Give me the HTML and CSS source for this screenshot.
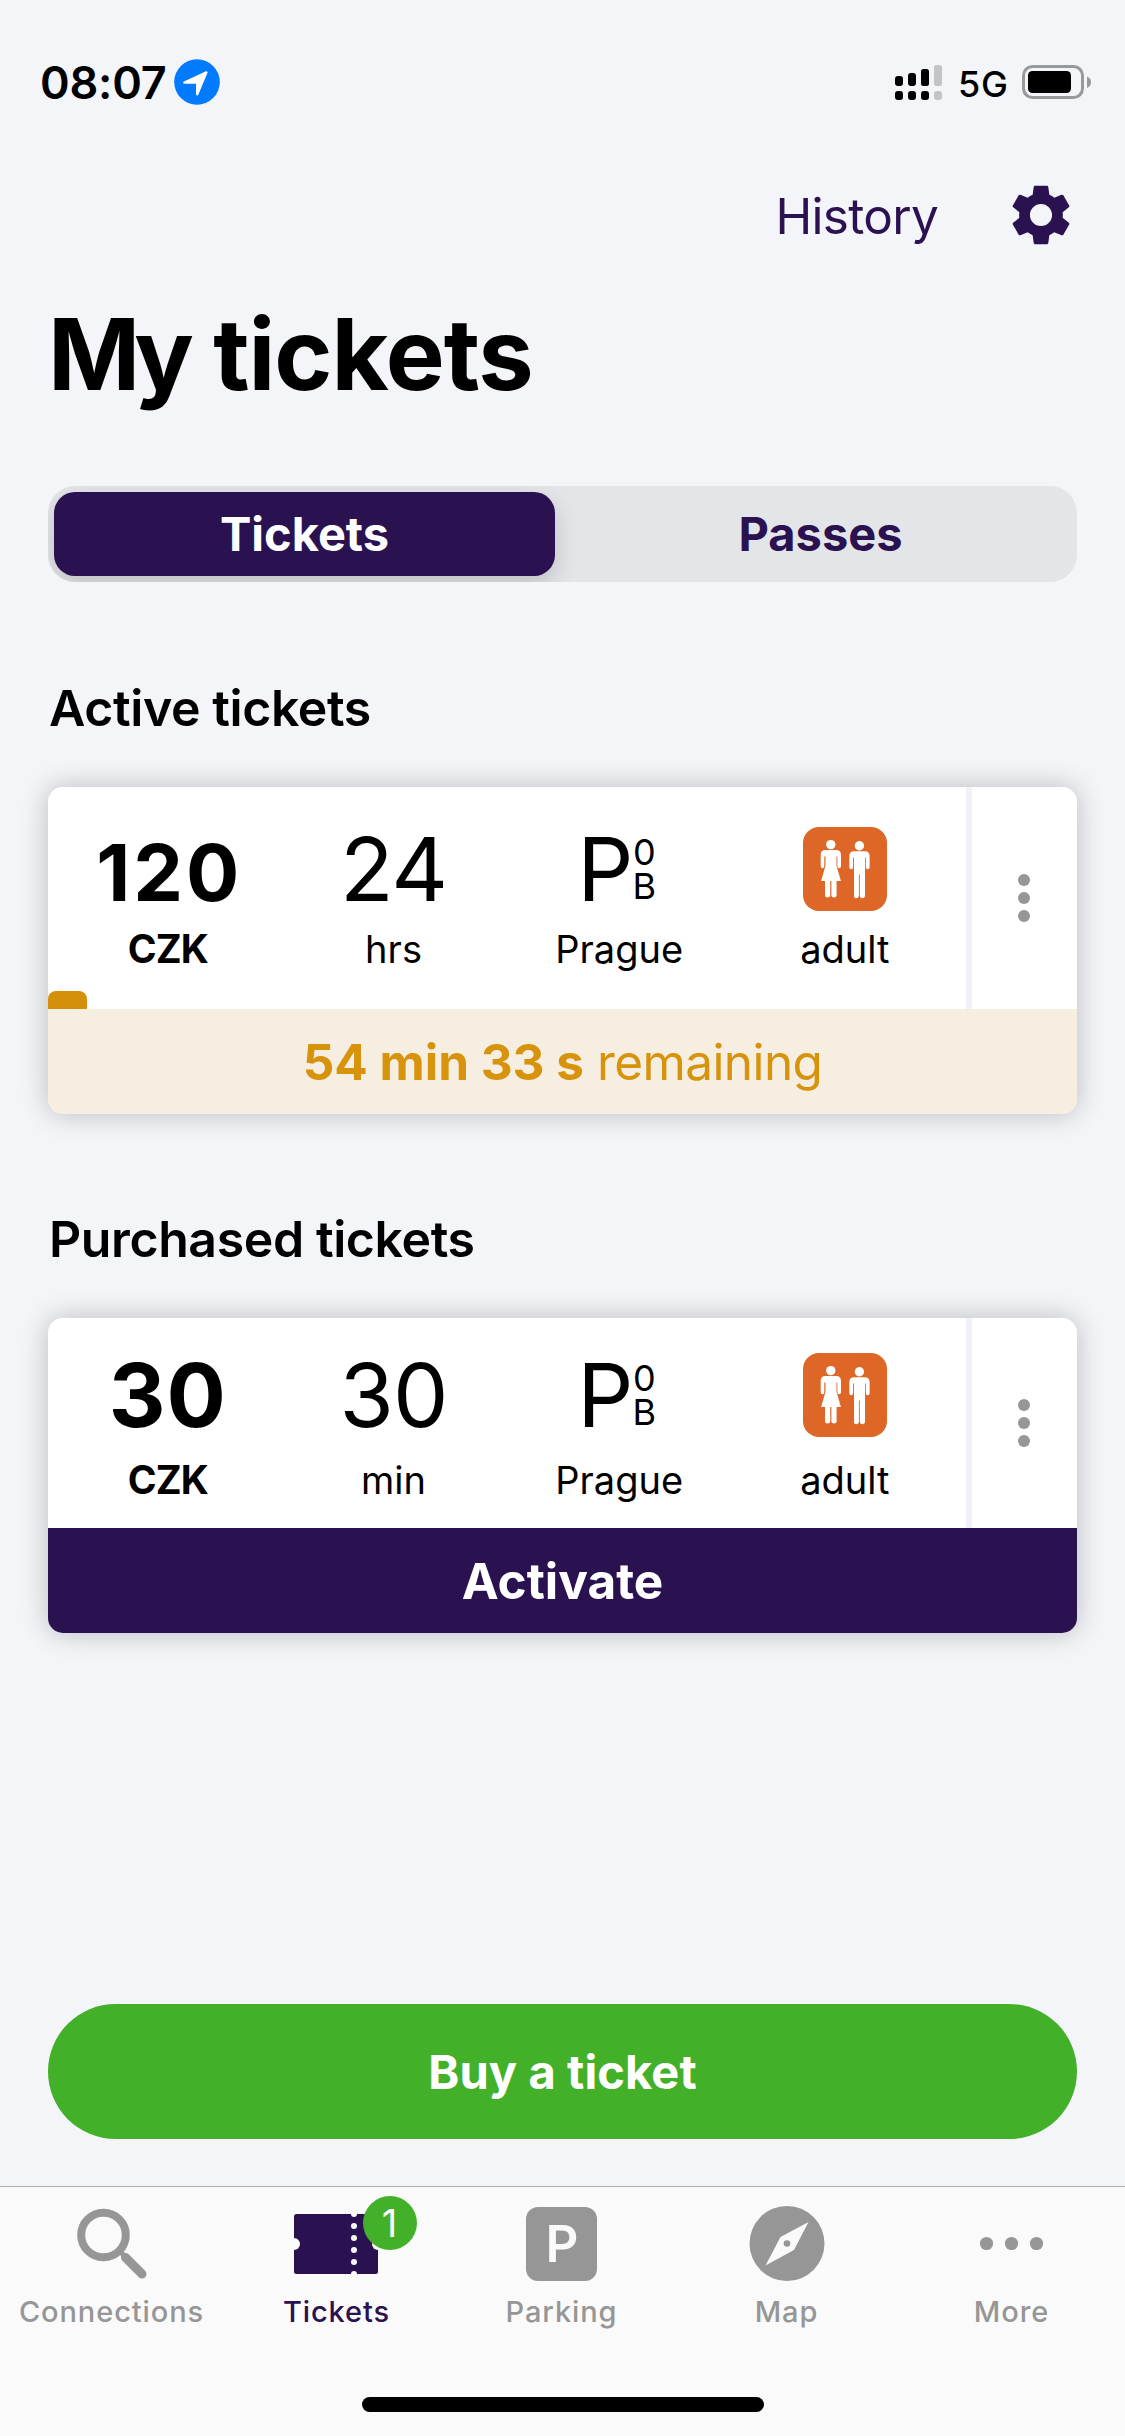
FILE: index.html
```
<!DOCTYPE html>
<html lang="en">
<head>
<meta charset="utf-8">
<title>My tickets</title>
<link rel="stylesheet" href="styles.css">
</head>
<body>
<svg class="defs" width="0" height="0" aria-hidden="true">
  <symbol id="adult" viewBox="0 0 84 84">
    <rect width="84" height="84" rx="16" fill="#de6728"/>
    <g fill="#fff">
      <circle cx="27.8" cy="17.6" r="4.7"/>
      <path d="M22.500 23h10.600q4.900 0 4.900 5v11q0 2.200-1.800 2.200T34.400 39V29.500h-.9v9.300L37.900 54h-4.300v14.600q0 1.900-2.600 1.900t-2.600-1.900V54h-1.200v14.600q0 1.900-2.600 1.900T22 68.600V54h-3.900l4.400-15.200v-9.300h-1.200V39q0 2.200-1.800 2.200T17.700 39V28q0-5 4.800-5z"/>
      <circle cx="56.400" cy="18.700" r="4.700"/>
      <path d="M51.200 24.200h10.400q5 0 5 5V40q0 2.200-1.900 2.200T62.800 40v-9.500H62v38.600q0 2.100-2.600 2.100t-2.600-2.100V47.500h-.9v21.600q0 2.100-2.600 2.100T51 69.100V30.500h-.9V40q0 2.200-1.900 2.200T46.300 40V29.200q0-5 4.900-5z"/>
    </g>
  </symbol>
  <symbol id="dots" viewBox="0 0 12 48">
    <g fill="#969696"><circle cx="6" cy="6" r="6"/><circle cx="6" cy="24" r="6"/><circle cx="6" cy="42" r="6"/></g>
  </symbol>
</svg>

<header class="status">
  <span class="time">08:07</span>
  <svg class="location" width="46" height="46" viewBox="0 0 46 46">
    <circle cx="23" cy="23" r="22.800" fill="#007aff"/>
    <path d="M32.400 13.400L23.200 35.200V23.500H10.400z" fill="#fff" stroke="#fff" stroke-width="2.400" stroke-linejoin="round"/>
  </svg>
  <div class="status-right">
    <svg width="47" height="35" viewBox="0 0 47 35">
      <rect y="11" width="8" height="10" rx="3"/><rect y="26" width="8" height="9" rx="3"/>
      <rect x="13" y="8" width="8" height="13" rx="3"/><rect x="13" y="26" width="8" height="9" rx="3"/>
      <rect x="26" y="4" width="8" height="17" rx="2.500"/><rect x="26" y="26" width="8" height="9" rx="3"/>
      <g fill="#c3c4c7"><rect x="39" width="8" height="21" rx="2.500"/><rect x="39" y="26" width="8" height="9" rx="3"/></g>
    </svg>
    <span class="network">5G</span>
    <svg width="69" height="34" viewBox="0 0 69 34">
      <rect x="1.500" y="1.500" width="59" height="31" rx="9" fill="none" stroke="#98999b" stroke-width="3"/>
      <rect x="6" y="6" width="43" height="22" rx="4.500"/>
      <path d="M65 11.500q4 1.500 4 5.700t-4 5.700z" fill="#98999b"/>
    </svg>
  </div>
</header>

<main class="screen">
  <nav class="actions">
    <a class="history">History</a>
    <svg class="gear" width="70" height="70" viewBox="0 0 24 24" fill="#2a1150"><path d="M19.430 12.980c.040-.320.070-.640.070-.980s-.030-.660-.070-.980l2.110-1.650c.190-.150.240-.420.120-.640l-2-3.460c-.120-.220-.390-.300-.610-.220l-2.490 1c-.520-.400-1.080-.730-1.690-.980l-.380-2.650C14.460 2.180 14.250 2 14 2h-4c-.250 0-.460.180-.490.420l-.380 2.650c-.610.250-1.170.590-1.690.980l-2.490-1c-.230-.090-.490 0-.610.220l-2 3.460c-.130.220-.070.490.120.640l2.110 1.650c-.040.320-.070.650-.070.980s.030.660.070.980l-2.110 1.650c-.190.150-.240.420-.120.640l2 3.460c.120.220.390.300.610.220l2.490-1c.520.400 1.080.730 1.690.980l.380 2.650c.030.240.240.420.490.420h4c.250 0 .460-.180.490-.420l.380-2.650c.610-.250 1.170-.590 1.690-.980l2.490 1c.230.090.490 0 .610-.220l2-3.460c.120-.220.070-.490-.120-.640l-2.110-1.650zM12 15.800c-2.100 0-3.800-1.700-3.800-3.800s1.700-3.800 3.800-3.800 3.800 1.700 3.800 3.800-1.700 3.800-3.800 3.800z"/></svg>
  </nav>
  <h1 class="title"><span class="title-initial">M</span>y tickets</h1>

  <div class="segmented">
    <span class="segment segment-on">Tickets</span>
    <span class="segment segment-off">Passes</span>
  </div>

  <h2 class="section active-title">Active tickets</h2>
  <article class="card card-active">
    <div class="card-body">
      <div class="facts">
        <div class="fact"><div class="value price price-small">120</div><div class="label currency">CZK</div></div>
        <div class="fact"><div class="value">24</div><div class="label">hrs</div></div>
        <div class="fact"><div class="value zone"><span>P</span><span class="zone-sub"><span>0</span><span>B</span></span></div><div class="label">Prague</div></div>
        <div class="fact"><div class="value"><svg width="84" height="84"><use href="#adult"/></svg></div><div class="label">adult</div></div>
      </div>
      <div class="menu"><svg width="12" height="48"><use href="#dots"/></svg></div>
      <div class="progress"></div>
    </div>
    <div class="strip remaining"><b>54 min 33 s</b><span>remaining</span></div>
  </article>

  <h2 class="section purchased-title">Purchased tickets</h2>
  <article class="card card-purchased">
    <div class="card-body">
      <div class="facts">
        <div class="fact"><div class="value price">30</div><div class="label currency">CZK</div></div>
        <div class="fact"><div class="value">30</div><div class="label">min</div></div>
        <div class="fact"><div class="value zone"><span>P</span><span class="zone-sub"><span>0</span><span>B</span></span></div><div class="label">Prague</div></div>
        <div class="fact"><div class="value"><svg width="84" height="84"><use href="#adult"/></svg></div><div class="label">adult</div></div>
      </div>
      <div class="menu"><svg width="12" height="48"><use href="#dots"/></svg></div>
    </div>
    <div class="strip activate">Activate</div>
  </article>

  <a class="buy">Buy a ticket</a>
</main>

<footer class="tabbar">
  <nav class="tabs">
    <a class="tab">
      <svg class="icon" width="80" height="80" viewBox="0 0 80 80" fill="none" stroke="#969696">
        <circle cx="31.500" cy="31" r="22.300" stroke-width="8"/>
        <path d="M48.500 48l4 4" stroke-width="5"/>
        <path d="M53.500 53.500L70 70" stroke-width="9" stroke-linecap="round"/>
      </svg>
      <span>Connections</span>
    </a>
    <a class="tab tab-on">
      <span class="icon-wrap">
        <svg class="icon" width="84" height="80" viewBox="0 0 84 80">
          <rect y="10" width="84" height="60" rx="2.500" fill="#2a1150"/>
          <g fill="#fafafa">
            <circle cx="0" cy="40" r="6"/><circle cx="84" cy="40" r="6"/>
            <circle cx="60" cy="10" r="3"/><circle cx="60" cy="22" r="3"/><circle cx="60" cy="34" r="3"/><circle cx="60" cy="46" r="3"/><circle cx="60" cy="58" r="3"/><circle cx="60" cy="70" r="3"/>
          </g>
        </svg>
        <span class="badge">1</span>
      </span>
      <span>Tickets</span>
    </a>
    <a class="tab">
      <span class="parking-icon">P</span>
      <span>Parking</span>
    </a>
    <a class="tab">
      <svg class="icon" width="80" height="80" viewBox="0 0 80 80">
        <circle cx="40" cy="39.500" r="37.500" fill="#969696"/>
        <path d="M61.500 18L47 46L18.500 61.500L33.500 33z" fill="#fafafa"/>
        <circle cx="40" cy="39.500" r="3.300" fill="#969696"/>
      </svg>
      <span>Map</span>
    </a>
    <a class="tab">
      <svg class="icon" width="80" height="80" viewBox="0 0 80 80" fill="#969696">
        <circle cx="14.500" cy="39.500" r="6.600"/><circle cx="39.500" cy="39.500" r="6.600"/><circle cx="64.500" cy="39.500" r="6.600"/>
      </svg>
      <span>More</span>
    </a>
  </nav>
  <div class="home-indicator"></div>
</footer>
</body>
</html>
```
FILE: styles.css
```
* { box-sizing: border-box; }

body {
  margin: 0;
  width: 1125px;
  height: 2436px;
  display: flex;
  flex-direction: column;
  background: #f4f5f9;
  color: #000;
  font-family: Inter, "Liberation Sans", sans-serif;
  overflow: hidden;
}

svg { display: block; flex: none; }
.defs { position: absolute; }

.status {
  height: 164px;
  padding: 0 34px 0 40px;
  display: flex;
  align-items: center;
}
.time { width: 134px; font-size: 45px; font-weight: 600; letter-spacing: -0.2px; }
.status-right { margin-left: auto; display: flex; align-items: center; }
.network {
  width: 80px;
  padding-left: 16px;
  font-size: 36px;
  font-weight: 500;
  line-height: 44px;
  padding-top: 3px;
  letter-spacing: 0.7px;
}

.screen {
  flex: 1;
  display: flex;
  flex-direction: column;
  padding: 0 48px 47px;
}
.actions {
  height: 104px;
  display: flex;
  align-items: center;
  justify-content: flex-end;
  gap: 68px;
}
.history { color: #2a1150; font-size: 49.5px; letter-spacing: -0.7px; }
.gear { margin: -2px 1px 0 0; }
.title {
  margin: 26px 0 0;
  font-size: 99px;
  line-height: 120px;
  font-weight: 700;
  letter-spacing: -1px;
  word-spacing: -2px;
}
.title-initial { letter-spacing: -6px; }

.segmented {
  margin-top: 72px;
  height: 96px;
  padding: 6px;
  border-radius: 27px;
  display: grid;
  grid-template-columns: 501px 1fr;
  background: #e4e5e9;
  overflow: hidden;
  flex: none;
}
.segment {
  display: flex;
  align-items: center;
  justify-content: center;
  border-radius: 21px;
  color: #2a1150;
  font-size: 47px;
  line-height: 82px;
  font-weight: 700;
}
.segment-off { padding-left: 15px; }
.segment-on {
  background: #2a1150;
  color: #fff;
  box-shadow: 0 9px 24px rgba(0, 0, 0, 0.16);
}

.section {
  margin: 0 1px;
  font-size: 50px;
  line-height: 60px;
  font-weight: 600;
  letter-spacing: -0.4px;
}
.active-title { margin-top: 96px; }
.purchased-title { margin-top: 95px; }

.card {
  margin-top: 49px;
  border-radius: 15px;
  box-shadow: 0 0 28px rgba(0, 0, 0, 0.24);
  flex: none;
}
.card-body {
  position: relative;
  display: grid;
  grid-template-columns: 924px 105px;
  height: 222px;
  background: #fff;
  border-radius: 15px 15px 0 0;
}
.facts {
  display: grid;
  grid-template-columns: repeat(4, 225.7px);
  padding: 38px 0 0 7px;
  border-right: 6px solid #f1f2f7;
}
.fact { text-align: center; }
.value {
  height: 88px;
  display: flex;
  justify-content: center;
  align-items: center;
  font-size: 88px;
  line-height: 88px;
  letter-spacing: -1px;
}
.price { font-weight: 700; letter-spacing: 1px; }
.price-small { font-size: 79px; padding: 6px 0 0 3px; letter-spacing: 3px; }
.zone { padding-right: 5px; letter-spacing: 0; }
.zone-sub {
  display: flex;
  flex-direction: column;
  font-size: 36px;
  line-height: 34.500px;
  margin-left: -1px;
}
.label { margin-top: 12px; font-size: 38px; line-height: 48px; }
.currency { font-size: 39px; font-weight: 650; letter-spacing: -0.8px; }
.menu { display: flex; align-items: center; justify-content: center; padding-right: 2px; }
.progress {
  position: absolute;
  left: 0;
  bottom: 0;
  width: 39px;
  height: 18px;
  border-radius: 8px 8px 0 0;
  background: #d4900b;
}
.card-purchased .card-body { height: 210px; }
.card-purchased .facts { padding-top: 33px; }
.card-purchased .label { margin-top: 17px; }

.strip {
  height: 105px;
  display: flex;
  align-items: center;
  justify-content: center;
  border-radius: 0 0 15px 15px;
  font-size: 49.500px;
}
.remaining { gap: 13px; background: #f5eee1; color: #d6930b; }
.remaining b { font-weight: 650; letter-spacing: 0; }
.remaining span { letter-spacing: -0.6px; }
.activate { background: #2a1150; color: #fff; font-weight: 700; }

.buy {
  margin-top: auto;
  height: 135px;
  display: flex;
  align-items: center;
  justify-content: center;
  border-radius: 68px;
  background: #43b02a;
  color: #fff;
  font-size: 47px;
  font-weight: 700;
  letter-spacing: 0.1px;
}

.tabbar {
  height: 250px;
  border-top: 1px solid #adadae;
  background: #fafafa;
}
.tabs {
  display: grid;
  grid-template-columns: repeat(5, 225px);
  margin-left: -1px;
  padding-top: 17px;
}
.tab {
  display: flex;
  flex-direction: column;
  align-items: center;
  gap: 10px;
  color: #969696;
  font-size: 29px;
  line-height: 36px;
  font-weight: 500;
  letter-spacing: 0.9px;
}
.tab-on { color: #2a1150; }
.icon-wrap { position: relative; margin-right: 2px; }
.badge {
  position: absolute;
  left: 69px;
  top: -8px;
  width: 54px;
  height: 54px;
  border-radius: 50%;
  background: #43b02a;
  color: #fff;
  font-size: 38px;
  font-weight: 400;
  letter-spacing: 0;
  line-height: 54px;
  text-align: center;
}
.parking-icon {
  width: 71px;
  height: 74px;
  margin: 3px 0;
  padding-left: 1px;
  border-radius: 12px;
  background: #969696;
  color: #fafafa;
  font-size: 51px;
  font-weight: 600;
  letter-spacing: 0;
  line-height: 73px;
  text-align: center;
}
.home-indicator {
  width: 402px;
  height: 15px;
  margin: 67px auto 0;
  border-radius: 8px;
  background: #000;
}
```
